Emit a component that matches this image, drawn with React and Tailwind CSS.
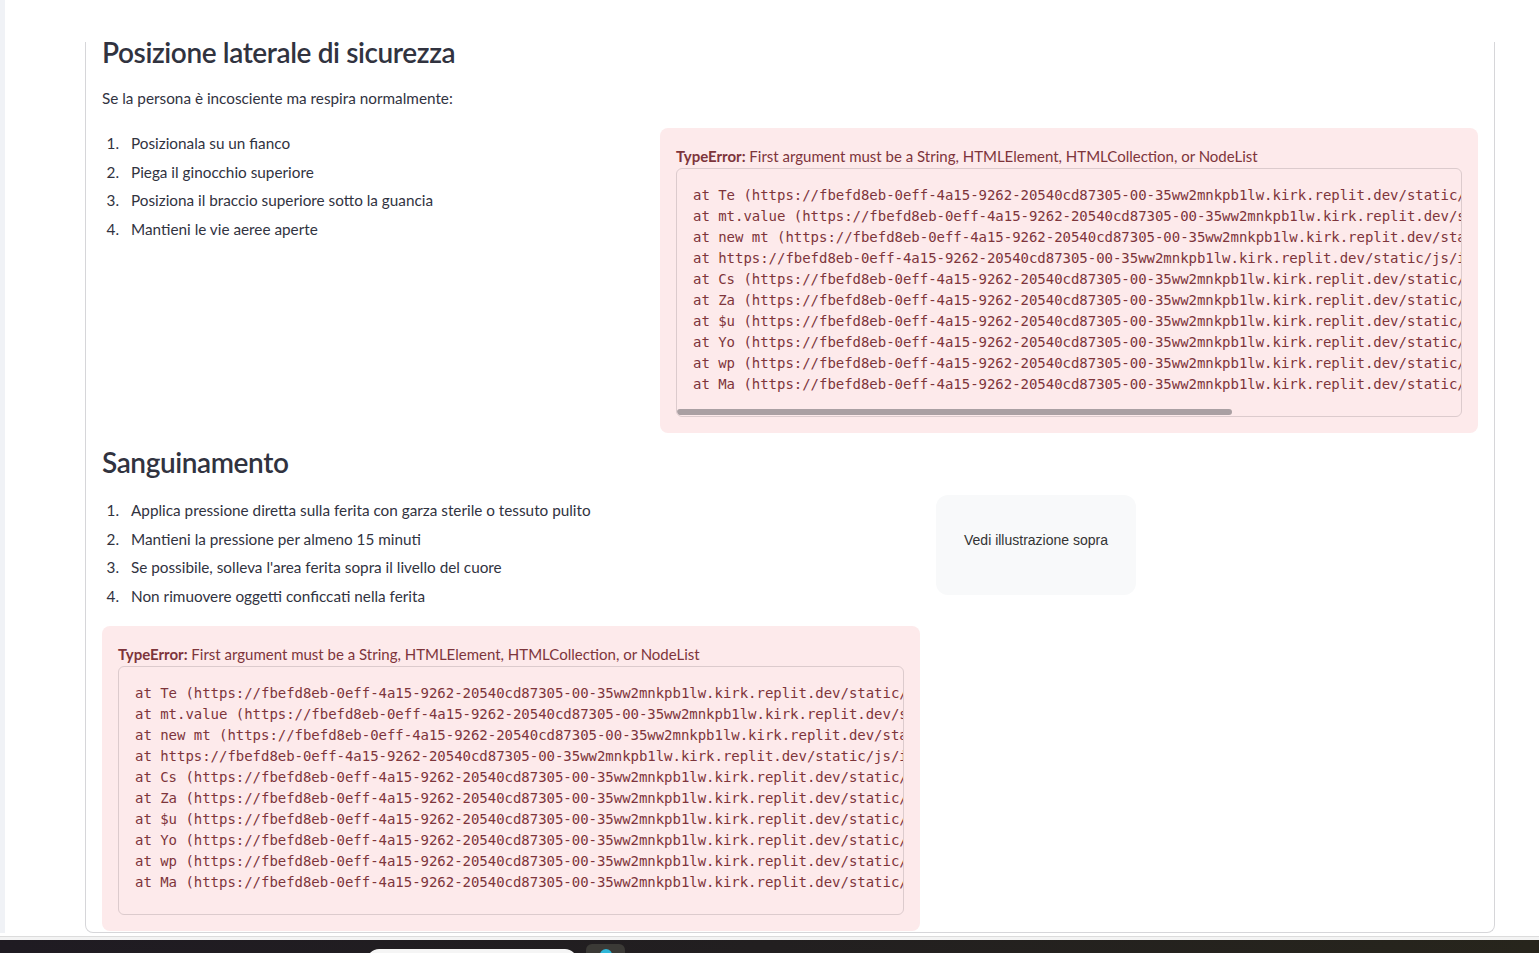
import React from "react";

const host = "https://fbefd8eb-0eff-4a15-9262-20540cd87305-00-35ww2mnkpb1lw.kirk.replit.dev/static/js/index.CD2t1RbP.js";

const traceLines = [
  `at Te (${host}:1:2839)`,
  `at mt.value (${host}:1:7153)`,
  `at new mt (${host}:1:6203)`,
  `at ${host}:1:15288`,
  `at Cs (${host}:38:17072)`,
  `at Za (${host}:38:24377)`,
  `at $u (${host}:38:35770)`,
  `at Yo (${host}:38:73425)`,
  `at wp (${host}:38:72956)`,
  `at Ma (${host}:38:72758)`,
];

const sans = "font-['Lato','Noto_Sans',sans-serif]";

function Steps({ items }) {
  return (
    <ol className="flex flex-col">
      {items.map((text, i) => (
        <li key={i} className="flex h-[28.75px] items-center text-[15.3px] text-[#31333f]">
          <span className="w-[17px] shrink-0 text-right">{i + 1}.</span>
          <span className="ml-3">{text}</span>
        </li>
      ))}
    </ol>
  );
}

function ErrorBox({ scrollbar }) {
  return (
    <div className="rounded-lg bg-[#fdeaeb] px-4 pt-4 pb-4 text-[#7d353b]">
      <div className="text-[15px] leading-6">
        <span className="font-bold">TypeError:</span> First argument must be a String, HTMLElement, HTMLCollection, or NodeList
      </div>
      <div className="relative overflow-hidden rounded-md border border-[#dccbcd] pl-4 pt-4 pb-[21px]">
        <pre className="whitespace-pre font-['DejaVu_Sans_Mono','Liberation_Mono',monospace] text-[14px] leading-[21px] tracking-[-0.03px] text-[#7d353b]">
          {traceLines.join("\n")}
        </pre>
        {scrollbar && (
          <div className="absolute bottom-[1px] left-0 h-[6px] w-[555px] rounded-full bg-[#aaa0a3]" />
        )}
      </div>
    </div>
  );
}

export default function App() {
  return (
    <div className={`flex h-[953px] flex-col overflow-hidden bg-white ${sans}`}>
      <div className="flex flex-1">
        <div className="w-[5px] shrink-0 bg-[#f0f2f6]" />
        <div className="ml-[80px] w-[1410px]">
          <div className="mt-[42px] flex h-[891px] flex-col rounded-b-lg border-x border-b border-[#d6d6d9] px-4">
            <div className="-mt-[42px] flex flex-col">
              <h2 className="mt-[32px] text-[28px] font-semibold leading-[40px] tracking-[-0.4px] text-[#31333f]">
                Posizione laterale di sicurezza
              </h2>
              <p className="mt-[14px] text-[15.3px] leading-6 text-[#31333f]">
                Se la persona è incosciente ma respira normalmente:
              </p>

              <div className="mt-[18px] grid grid-cols-[542px_818px] gap-4">
                <div className="pt-[1px]">
                  <Steps
                    items={[
                      "Posizionala su un fianco",
                      "Piega il ginocchio superiore",
                      "Posiziona il braccio superiore sotto la guancia",
                      "Mantieni le vie aeree aperte",
                    ]}
                  />
                </div>
                <ErrorBox scrollbar />
              </div>

              <h2 className="mt-[9px] text-[28px] font-semibold leading-[40px] tracking-[-0.4px] text-[#31333f]">
                Sanguinamento
              </h2>

              <div className="mt-[13px] grid grid-cols-[818px_542px] gap-4">
                <div className="flex flex-col">
                  <div className="pt-[1px]">
                    <Steps
                      items={[
                        "Applica pressione diretta sulla ferita con garza sterile o tessuto pulito",
                        "Mantieni la pressione per almeno 15 minuti",
                        "Se possibile, solleva l'area ferita sopra il livello del cuore",
                        "Non rimuovere oggetti conficcati nella ferita",
                      ]}
                    />
                  </div>
                  <div className="mt-[15px]">
                    <ErrorBox />
                  </div>
                </div>
                <div>
                  <div className="flex h-[100px] w-[200px] items-center justify-center rounded-xl bg-[#f8f9fa] pb-[10px] font-['Liberation_Sans',Arial,sans-serif] text-[14px] text-[#333333]">
                    Vedi illustrazione sopra
                  </div>
                </div>
              </div>
            </div>
          </div>
        </div>
      </div>

      {/* bottom of browser window + taskbar */}
      <div className="mt-[3px] h-px bg-[#dcdcdc]" />
      <div className="h-[3px] bg-[#f3f3f3]" />
      <div className="flex h-[13px] shrink-0 overflow-hidden bg-gradient-to-r from-[#1f1b22] via-[#221f20] to-[#27251c] pl-[367px]">
        <div className="mt-[9px] h-[24px] w-[210px] rounded-full bg-[#f5f5f5]" />
        <div className="ml-[9px] mt-[4px] flex h-[30px] w-[39px] justify-center rounded-md bg-[#3b3a36]">
          <div className="mt-[5px] h-[8px] w-[12px] rounded-t-full bg-[#2fb7d8]" />
        </div>
      </div>
    </div>
  );
}
